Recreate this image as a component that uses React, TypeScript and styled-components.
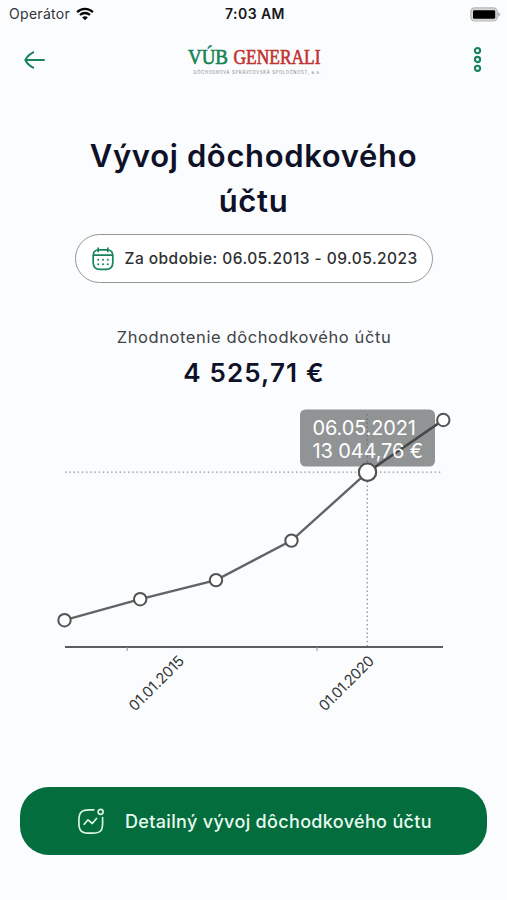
import React from "react";
import styled, { createGlobalStyle } from "styled-components";

const GlobalStyle = createGlobalStyle`
  * { box-sizing: border-box; }
  body { margin: 0; background: #fafcfe; }
`;

const Screen = styled.main`
  width: 507px;
  height: 900px;
  overflow: hidden;
  display: flex;
  flex-direction: column;
  align-items: center;
  background: #fafcfe;
  color: #0e1127;
  font-family: Inter, "Liberation Sans", sans-serif;
`;

const StatusBar = styled.div`
  width: 100%;
  height: 28px;
  flex: none;
  display: grid;
  grid-template-columns: 1fr auto 1fr;
  align-items: center;
  padding: 0 6px 0 9px;
  color: #161718;
`;

const Carrier = styled.div`
  display: flex;
  align-items: center;
  gap: 6px;
  font-size: 14px;
  line-height: 28px;
  letter-spacing: 0.3px;
  color: #333435;
`;

const Clock = styled.div`
  font-size: 14px;
  font-weight: 600;
  line-height: 28px;
  letter-spacing: 0.45px;
`;

const BatterySlot = styled.div`
  display: flex;
  justify-content: flex-end;
`;

const Header = styled.header`
  width: 100%;
  height: 64px;
  flex: none;
  display: grid;
  grid-template-columns: 1fr auto 1fr;
  align-items: center;
  padding: 0 18px 0 23px;
`;

const IconButton = styled.button<{ $end?: boolean }>`
  width: 24px;
  height: 30px;
  padding: 0;
  border: 0;
  background: none;
  display: flex;
  align-items: center;
  justify-content: center;
  justify-self: ${({ $end }) => ($end ? "end" : "start")};
`;

const LogoMark = styled.svg`
  display: block;
  overflow: visible;
`;

const Title = styled.h1`
  width: 360px;
  margin: 41px 0 0;
  font-size: 31px;
  line-height: 45px;
  font-weight: 600;
  letter-spacing: 0.65px;
  text-align: center;
`;

const Period = styled.button`
  width: 358px;
  height: 49px;
  flex: none;
  margin: 11px 0 0;
  padding: 0 0 0 15px;
  display: flex;
  align-items: center;
  gap: 10px;
  border: 1.4px solid #949696;
  border-radius: 25px;
  background: #fff;
  color: #2e3032;
  font-family: inherit;
  font-size: 15.5px;
  font-weight: 500;
  letter-spacing: 0.46px;
  white-space: nowrap;
`;

const Caption = styled.p`
  margin: 42px 0 0;
  padding-left: 1px;
  font-size: 16.5px;
  line-height: 24px;
  letter-spacing: 0.6px;
  color: #404244;
`;

const Amount = styled.p`
  margin: 6px 0 0;
  padding-left: 1px;
  font-size: 26px;
  line-height: 36px;
  font-weight: 600;
  letter-spacing: 1.15px;
`;

const Chart = styled.svg`
  display: block;
  flex: none;
  margin-top: 9px;
  font-family: Inter, "Liberation Sans", sans-serif;
`;

const Action = styled.button`
  width: 467px;
  height: 68px;
  flex: none;
  margin-top: 67px;
  padding: 0 0 0 57px;
  display: flex;
  align-items: center;
  gap: 20px;
  border: 0;
  border-radius: 29px;
  background: #036d3e;
  color: #e9faf0;
  font-family: inherit;
  font-size: 18px;
  font-weight: 500;
  letter-spacing: 0.33px;
  white-space: nowrap;
`;

const GREEN = "#17835a";

const WifiIcon = () => (
  <svg width="18" height="14" viewBox="0 0 18 14" fill="none" stroke="#080808" strokeWidth="2.3">
    <path d="M1.1 5.1C5.5.8 12.5.8 16.9 5.1" />
    <path d="M4 8C6.8 5.3 11.2 5.3 14 8" />
    <path d="M6.2 10.4C7.8 8.9 10.2 8.9 11.8 10.4L9 13.3Z" fill="#080808" stroke="none" />
  </svg>
);

const BatteryIcon = () => (
  <svg width="31" height="15" viewBox="0 0 31 15">
    <rect x="0.8" y="0.8" width="26.4" height="13.2" rx="3.8" fill="#d5d6d6" stroke="#b7b8b8" strokeWidth="1.2" />
    <path d="M28 5L30.8 7.4L28 10Z" fill="#b5b6b6" />
    <rect x="3" y="3.2" width="22.2" height="8.6" rx="1.4" fill="#000" />
  </svg>
);

const BackIcon = () => (
  <svg width="24" height="20" viewBox="0 0 24 20" fill="none" stroke={GREEN} strokeWidth="2" strokeLinecap="round">
    <path d="M21 10H2.6M10.2 2.3C6.5 4.2 3.9 6.6 2.4 10C3.9 13.4 6.5 15.8 10.2 17.6" />
  </svg>
);

const MenuIcon = () => (
  <svg width="10" height="28" viewBox="0 0 10 28" fill="#fafcfe" stroke={GREEN} strokeWidth="2.1">
    {[4.6, 13.5, 22.3].map((y) => <circle key={y} cx="5.5" cy={y} r="2.6" />)}
  </svg>
);

const Logo = () => (
  <LogoMark width="142" height="36" viewBox="-2 -1 142 36" aria-label="VÚB Generali">
    <g fontFamily="'Liberation Serif', serif" fontSize="21.5" strokeWidth="0.65">
      <text x="1" y="21" textLength="40" lengthAdjust="spacingAndGlyphs" fill="#168253" stroke="#168253">VÚB</text>
      <text x="46.5" y="21" textLength="87" lengthAdjust="spacingAndGlyphs" fill="#c13430" stroke="#c13430">GENERALI</text>
    </g>
    <text x="6.5" y="31" textLength="127" fontSize="4.2" fontFamily="Inter, sans-serif" fill="#7b7d80">
      DÔCHODKOVÁ SPRÁVCOVSKÁ SPOLOČNOSŤ, a.s.
    </text>
  </LogoMark>
);

const CalendarIcon = () => (
  <svg width="24" height="26" viewBox="0 0 24 26" fill="none" stroke={GREEN} strokeWidth="1.7" strokeLinecap="round">
    <path d="M7.2 2.2V5.4M16.8 2.2V5.4M7.2 3.8H16.8" />
    <path d="M6.5 4C3.6 4.4 2.2 6.3 2.2 10V16.5C2.2 21.7 4.4 23.4 9 23.4H15C19.6 23.4 21.8 21.7 21.8 16.5V10C21.8 6.3 20.4 4.4 17.5 4" />
    <path d="M2.6 9.2H21.4" />
    <g fill={GREEN} stroke="none">
      {[13.7, 18.2].map((y) => [7.2, 12, 16.8].map((x) => <circle key={`${x}-${y}`} cx={x} cy={y} r="1" />))}
    </g>
  </svg>
);

const ActivityIcon = () => (
  <svg width="28" height="28" viewBox="0 0 28 28" fill="none" stroke="#d9f5e5" strokeWidth="1.7" strokeLinecap="round" strokeLinejoin="round">
    <path d="M16.8 2.8H12.5C4.5 2.8 1.9 5.3 1.9 13.2V16C1.9 23.8 4.5 26.2 12.5 26.2H15.5C23.5 26.2 25.6 23.8 25.6 16V10.6" />
    <circle cx="23.6" cy="4.8" r="2.5" />
    <path d="M7.2 17.3L11 12.8L15.3 16.5L19.5 11.5" />
  </svg>
);

const points = [
  [64.5, 620.2], [140.2, 599.2], [216, 580.1], [291.5, 540.6], [367.5, 472.2], [443.3, 420],
];

const labels = [
  { text: "01.01.2015", x: 135, y: 712 },
  { text: "01.01.2020", x: 325, y: 712 },
];

const GrowthChart = () => (
  <Chart width="507" height="320" viewBox="0 400 507 320">
    <g stroke="#929496" strokeWidth="1.3" strokeDasharray="1.5 2.7">
      <path d="M65 472.2H443" />
      <path d="M367.3 414V646" />
    </g>
    <path d="M65 647H443" stroke="#5b5d5e" strokeWidth="2" />
    <path d="M127.2 647V651M317 647V651" stroke="#929496" />
    <polyline points={points.map((p) => p.join(",")).join(" ")} fill="none" stroke="#626464" strokeWidth="2.4" />
    {points.map(([x, y], i) => (
      <circle key={x} cx={x} cy={y} r={i === 4 ? 8.6 : 6.2} fill="#fff" stroke="#505253" strokeWidth="2" />
    ))}
    <rect x="300" y="409.5" width="135" height="57" rx="5.5" fill="#777979" fillOpacity="0.8" />
    <path d="M367.3 414V464" stroke="#77797a" strokeWidth="1.3" strokeDasharray="1.5 2.7" />
    <path d="M374 467.7L437.5 424" stroke="#454748" strokeWidth="2.3" />
    <circle cx="367.5" cy="472.2" r="8.6" fill="#fff" stroke="#505253" strokeWidth="2" />
    <g fill="#fff" fontSize="20">
      <text x="312.5" y="435" textLength="103.5">06.05.2021</text>
      <text x="312.5" y="458" textLength="110.5">13 044,76 €</text>
    </g>
    <g fill="#343637" fontSize="14.8">
      {labels.map(({ text, x, y }) => (
        <text key={text} x={x} y={y} textLength="71" transform={`rotate(-45 ${x} ${y})`}>{text}</text>
      ))}
    </g>
  </Chart>
);

export default function App() {
  return (
    <>
      <GlobalStyle />
      <Screen>
        <StatusBar>
          <Carrier>Operátor <WifiIcon /></Carrier>
          <Clock>7:03 AM</Clock>
          <BatterySlot><BatteryIcon /></BatterySlot>
        </StatusBar>
        <Header>
          <IconButton aria-label="Späť"><BackIcon /></IconButton>
          <Logo />
          <IconButton $end aria-label="Menu"><MenuIcon /></IconButton>
        </Header>
        <Title>Vývoj dôchodkového účtu</Title>
        <Period><CalendarIcon /><span>Za obdobie: 06.05.2013 - 09.05.2023</span></Period>
        <Caption>Zhodnotenie dôchodkového účtu</Caption>
        <Amount>4 525,71 €</Amount>
        <GrowthChart />
        <Action><ActivityIcon /><span>Detailný vývoj dôchodkového účtu</span></Action>
      </Screen>
    </>
  );
}
